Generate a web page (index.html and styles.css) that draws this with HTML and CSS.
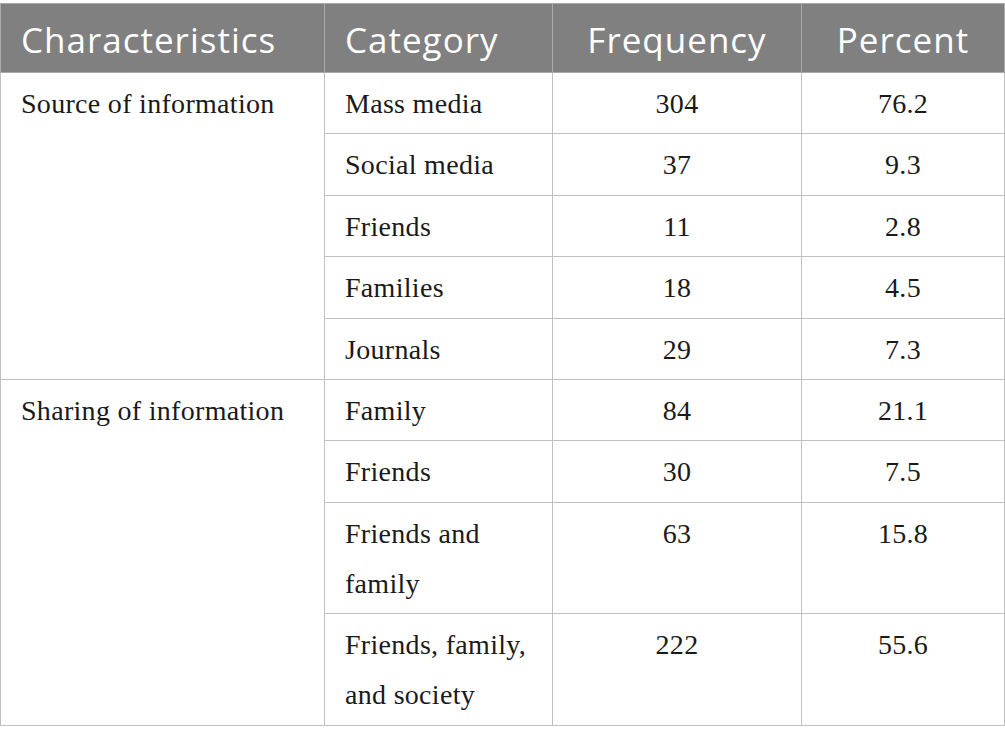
FILE: index.html
```html
<!DOCTYPE html>
<html lang="en">
<head>
    <meta charset="UTF-8">
    <title>Source and sharing of information</title>
    <link rel="stylesheet" href="styles.css">
</head>
<body>
    <table class="data-table">
        <colgroup>
            <col class="col-char">
            <col class="col-cat">
            <col class="col-freq">
            <col class="col-pct">
        </colgroup>
        <thead>
            <tr>
                <th class="left">Characteristics</th>
                <th class="left">Category</th>
                <th>Frequency</th>
                <th>Percent</th>
            </tr>
        </thead>
        <tbody>
            <tr>
                <td class="group" rowspan="5">Source of information</td>
                <td>Mass media</td>
                <td class="num">304</td>
                <td class="num">76.2</td>
            </tr>
            <tr>
                <td>Social media</td>
                <td class="num">37</td>
                <td class="num">9.3</td>
            </tr>
            <tr>
                <td>Friends</td>
                <td class="num">11</td>
                <td class="num">2.8</td>
            </tr>
            <tr>
                <td>Families</td>
                <td class="num">18</td>
                <td class="num">4.5</td>
            </tr>
            <tr>
                <td>Journals</td>
                <td class="num">29</td>
                <td class="num">7.3</td>
            </tr>
            <tr>
                <td class="group" rowspan="4">Sharing of information</td>
                <td>Family</td>
                <td class="num">84</td>
                <td class="num">21.1</td>
            </tr>
            <tr>
                <td>Friends</td>
                <td class="num">30</td>
                <td class="num">7.5</td>
            </tr>
            <tr>
                <td>Friends and<br>family</td>
                <td class="num">63</td>
                <td class="num">15.8</td>
            </tr>
            <tr>
                <td>Friends, family,<br>and society</td>
                <td class="num">222</td>
                <td class="num">55.6</td>
            </tr>
        </tbody>
    </table>
</body>
</html>
```

FILE: styles.css
```css
body {
    margin: 0;
    padding-top: 3px;
    background: #ffffff;
}

.data-table {
    border-collapse: collapse;
    table-layout: fixed;
    width: 1004px;
    border: 1px solid #c0c0c0;
}

.col-char { width: 324px; }
.col-cat { width: 228px; }
.col-freq { width: 249px; }
.col-pct { width: 203px; }

.data-table th {
    background-color: #7f807f;
    color: #ffffff;
    font-family: "Open Sans", sans-serif;
    font-weight: 400;
    font-size: 35px;
    letter-spacing: 1px;
    line-height: 44px;
    height: 69px;
    padding: 3px 20px 0;
    text-align: center;
    vertical-align: middle;
    border: 1px solid #a9aaa9;
    box-sizing: border-box;
}

.data-table th.left {
    text-align: left;
}

.data-table td {
    font-family: "Liberation Serif", serif;
    font-size: 28px;
    letter-spacing: 0.3px;
    line-height: 50px;
    color: #1a1a1a;
    padding: 6px 20px 4.4px;
    vertical-align: top;
    border: 1px solid #c0c0c0;
}

.data-table td.num {
    text-align: center;
}
```
